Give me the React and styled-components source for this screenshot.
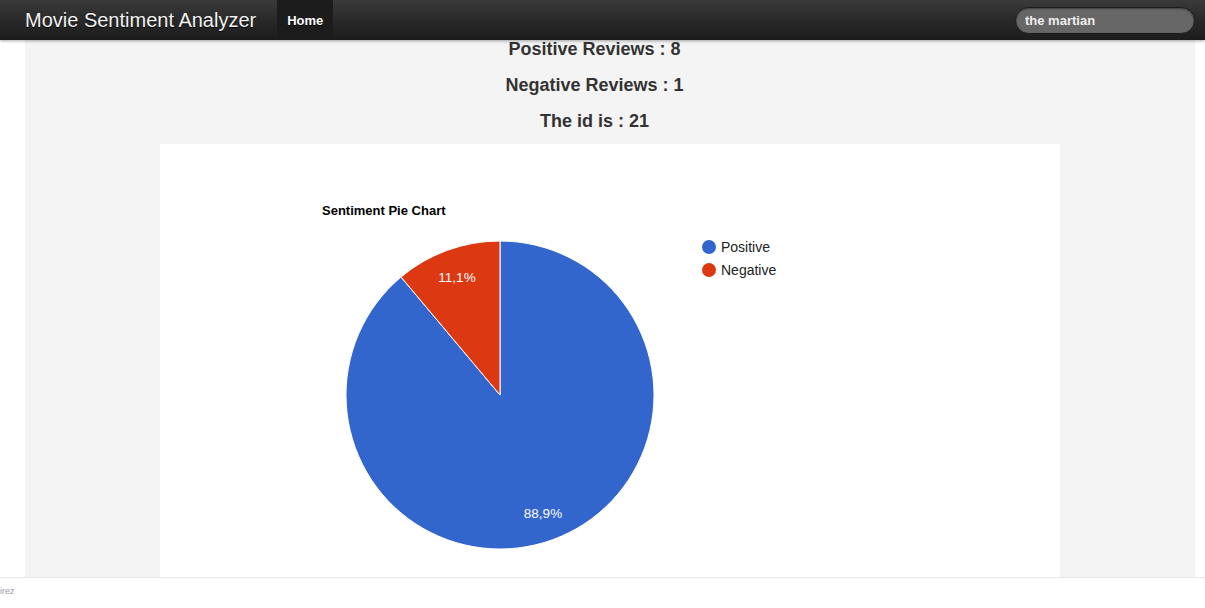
import React from 'react';
import styled, { createGlobalStyle } from 'styled-components';

const GlobalStyle = createGlobalStyle`
  html, body {
    margin: 0;
    padding: 0;
    background: #fff;
    font-family: "Liberation Sans", Arial, sans-serif;
  }
`;

const Page = styled.div`
  height: 100vh;
  display: flex;
  flex-direction: column;
  overflow: hidden;
`;

const NavBar = styled.nav`
  height: 40px;
  flex: none;
  display: flex;
  align-items: stretch;
  padding: 0 10px 0 25px;
  background: linear-gradient(to bottom, #3a3a3a 0%, #262626 60%, #1c1c1c 100%);
  box-shadow: 0 1px 3px rgba(0, 0, 0, 0.35);
  position: relative;
  z-index: 2;
`;

const Brand = styled.a`
  display: flex;
  align-items: center;
  color: #f2f2f2;
  font-size: 20px;
  text-decoration: none;
  padding-right: 20px;
  text-shadow: 0 1px 0 #000;
`;

const NavTab = styled.a`
  display: flex;
  align-items: center;
  padding: 0 10px;
  margin-left: 1px;
  color: #fff;
  font-size: 13px;
  font-weight: bold;
  text-decoration: none;
  background: ${p => (p.active ? '#1c1c1c' : 'transparent')};
  text-shadow: 0 1px 0 #000;
`;

const Spacer = styled.div`
  flex: 1;
`;

const Search = styled.input`
  align-self: center;
  box-sizing: border-box;
  width: 180px;
  height: 27px;
  border-radius: 14px;
  border: 1px solid #1a1a1a;
  background: #676767;
  color: #eee;
  font-family: "Liberation Sans", Arial, sans-serif;
  font-size: 13px;
  font-weight: bold;
  padding: 0 9px;
  outline: none;
  box-shadow: inset 0 1px 2px rgba(0, 0, 0, 0.4);
`;

const Main = styled.main`
  flex: 1;
  overflow: hidden;
`;

const Panel = styled.section`
  box-sizing: border-box;
  width: 1170px;
  margin-left: 25px;
  height: 100%;
  padding-top: 1px;
  background: #f4f4f4;
  display: flex;
  flex-direction: column;
  align-items: center;
`;

const Stats = styled.div`
  display: flex;
  flex-direction: column;
  align-items: center;
  gap: 20px;
  padding-right: 31px;
`;

const Stat = styled.h3`
  margin: 0;
  font-size: 18px;
  line-height: 16px;
  font-weight: bold;
  color: #333;
`;

const ChartBox = styled.div`
  margin-top: 15px;
  width: 900px;
  flex: 1;
  background: #fff;
  overflow: hidden;
`;

const Footer = styled.footer`
  flex: none;
  height: 30px;
  border-top: 1px solid #e6e6e6;
  background: #fff;
  overflow: hidden;
  display: flex;
  align-items: center;
`;

const Credit = styled.span`
  font-size: 9px;
  color: #9a9aa4;
  margin-left: -19px;
  margin-top: -4px;
  white-space: nowrap;
`;

const slices = [
  { label: 'Positive', value: 8, color: '#3366cc', lx: 383, ly: 374 },
  { label: 'Negative', value: 1, color: '#dc3912', lx: 297, ly: 138 },
];

function PieChart() {
  const cx = 340;
  const cy = 251;
  const r = 154;
  const total = slices.reduce((s, x) => s + x.value, 0);
  let start = 0;
  const pt = a => [cx + r * Math.sin(a), cy - r * Math.cos(a)];

  return (
    <svg width="900" height="440" viewBox="0 0 900 440">
      <text x="162" y="71" fontFamily="Liberation Sans, Arial, sans-serif" fontSize="13" fontWeight="bold" fill="#000">
        Sentiment Pie Chart
      </text>
      {slices.map(s => {
        const frac = s.value / total;
        const a0 = start;
        const a1 = start + frac * Math.PI * 2;
        start = a1;
        const [x0, y0] = pt(a0);
        const [x1, y1] = pt(a1);
        const large = a1 - a0 > Math.PI ? 1 : 0;
        return (
          <g key={s.label}>
            <path
              d={`M${cx} ${cy} L${x0} ${y0} A${r} ${r} 0 ${large} 1 ${x1} ${y1} Z`}
              fill={s.color}
              stroke="#fff"
              strokeWidth="1"
            />
            <text
              x={s.lx}
              y={s.ly}
              textAnchor="middle"
              fontFamily="Liberation Sans, Arial, sans-serif"
              fontSize="13.5"
              fill="#fff"
            >
              {(frac * 100).toFixed(1).replace('.', ',')}%
            </text>
          </g>
        );
      })}
      {slices.map((s, i) => (
        <g key={'legend' + s.label}>
          <circle cx="549" cy={103 + i * 23} r="7" fill={s.color} />
          <text x="561" y={108 + i * 23} fontFamily="Liberation Sans, Arial, sans-serif" fontSize="14" fill="#222">
            {s.label}
          </text>
        </g>
      ))}
    </svg>
  );
}

export default function App() {
  return (
    <Page>
      <GlobalStyle />
      <NavBar>
        <Brand href="#">Movie Sentiment Analyzer</Brand>
        <NavTab href="#" active>Home</NavTab>
        <Spacer />
        <Search defaultValue="the martian" />
      </NavBar>
      <Main>
        <Panel>
          <Stats>
            <Stat>Positive Reviews : 8</Stat>
            <Stat>Negative Reviews : 1</Stat>
            <Stat>The id is : 21</Stat>
          </Stats>
          <ChartBox>
            <PieChart />
          </ChartBox>
        </Panel>
      </Main>
      <Footer>
        <Credit>Ramirez</Credit>
      </Footer>
    </Page>
  );
}
